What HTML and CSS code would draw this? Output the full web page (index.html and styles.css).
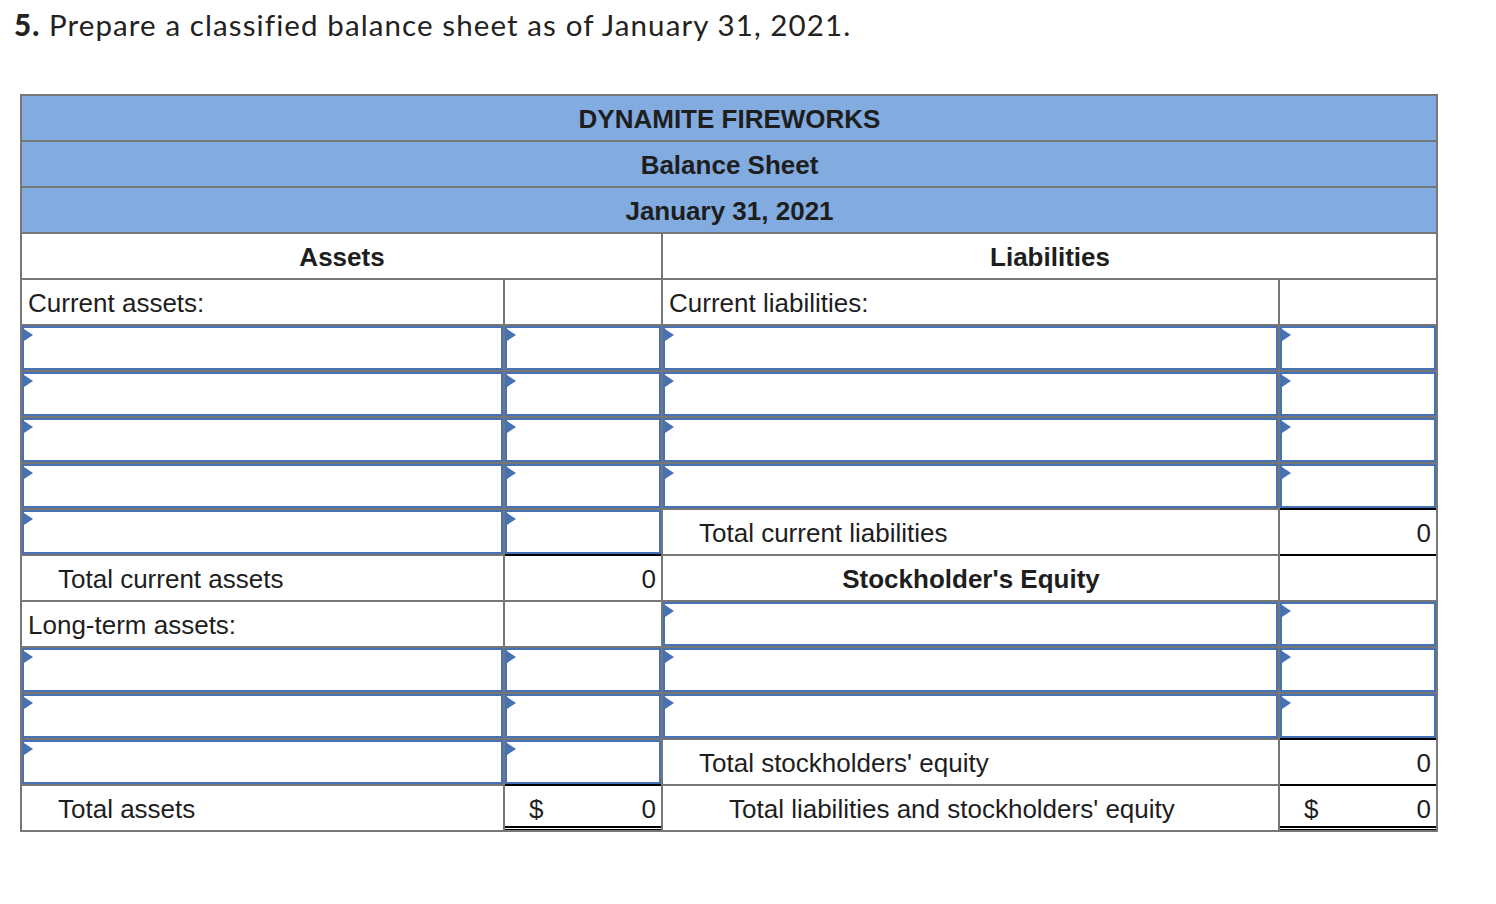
FILE: index.html
```html
<!DOCTYPE html>
<html>
<head>
<meta charset="utf-8">
<link rel="stylesheet" href="styles.css">
</head>
<body>
<div class="page">
  <div class="title"><b>5.</b> Prepare a classified balance sheet as of January 31, 2021.</div>
  <div class="sheet">
    <div class="c h">DYNAMITE FIREWORKS</div>
    <div class="c h">Balance Sheet</div>
    <div class="c h">January 31, 2021</div>

    <div class="c sec">Assets</div>
    <div class="c sec">Liabilities</div>

    <div class="c">Current assets:</div>
    <div class="c"></div>
    <div class="c">Current liabilities:</div>
    <div class="c"></div>

    <div class="c in"><div class="box"></div></div>
    <div class="c in"><div class="box"></div></div>
    <div class="c in"><div class="box"></div></div>
    <div class="c in"><div class="box"></div></div>

    <div class="c in"><div class="box"></div></div>
    <div class="c in"><div class="box"></div></div>
    <div class="c in"><div class="box"></div></div>
    <div class="c in"><div class="box"></div></div>

    <div class="c in"><div class="box"></div></div>
    <div class="c in"><div class="box"></div></div>
    <div class="c in"><div class="box"></div></div>
    <div class="c in"><div class="box"></div></div>

    <div class="c in"><div class="box"></div></div>
    <div class="c in"><div class="box"></div></div>
    <div class="c in"><div class="box"></div></div>
    <div class="c in"><div class="box"></div></div>

    <div class="c in"><div class="box"></div></div>
    <div class="c in"><div class="box"></div></div>
    <div class="c ind">Total current liabilities</div>
    <div class="c num line-tb">0</div>

    <div class="c ind">Total current assets</div>
    <div class="c num line-t">0</div>
    <div class="c center bold">Stockholder's Equity</div>
    <div class="c"></div>

    <div class="c">Long-term assets:</div>
    <div class="c"></div>
    <div class="c in"><div class="box"></div></div>
    <div class="c in"><div class="box"></div></div>

    <div class="c in"><div class="box"></div></div>
    <div class="c in"><div class="box"></div></div>
    <div class="c in"><div class="box"></div></div>
    <div class="c in"><div class="box"></div></div>

    <div class="c in"><div class="box"></div></div>
    <div class="c in"><div class="box"></div></div>
    <div class="c in"><div class="box"></div></div>
    <div class="c in"><div class="box"></div></div>

    <div class="c in"><div class="box"></div></div>
    <div class="c in"><div class="box"></div></div>
    <div class="c ind">Total stockholders' equity</div>
    <div class="c num line-tb">0</div>

    <div class="c ind">Total assets</div>
    <div class="c money dbl"><span>$</span><span>0</span></div>
    <div class="c ind2">Total liabilities and stockholders' equity</div>
    <div class="c money dbl"><span>$</span><span>0</span></div>
  </div>
</div>
</body>
</html>
```

FILE: styles.css
```css
html, body {
  margin: 0;
  padding: 0;
  background: #fff;
}

.page {
  padding-top: 7px;
}

.title {
  font-family: "Lato", "Open Sans", sans-serif;
  font-size: 29.5px;
  letter-spacing: 1.1px;
  line-height: 1.2;
  color: #222;
  padding-left: 14px;
  margin-bottom: 52px;
}

.title b {
  font-weight: 900;
}

.sheet {
  margin-left: 20px;
  display: grid;
  grid-template-columns: 481px 156px 615px 156px;
  grid-auto-rows: 44px;
  gap: 2px;
  padding: 2px;
  background: #777;
  width: max-content;
}

.c {
  background: #fff;
  display: flex;
  align-items: center;
  padding: 2px 5px 0 6px;
  font-family: "Liberation Sans", Arial, sans-serif;
  font-size: 26px;
  color: #1e1e1e;
  white-space: nowrap;
}

.h {
  grid-column: 1 / -1;
  background: #82abe0;
  justify-content: center;
  font-weight: bold;
}

.sec {
  grid-column: span 2;
  justify-content: center;
  font-weight: bold;
}

.center {
  justify-content: center;
}

.bold {
  font-weight: bold;
}

.in {
  padding: 0;
  align-items: stretch;
}

.box {
  flex: 1;
  border: 2px solid #4672b4;
  position: relative;
}

.box::before {
  content: "";
  position: absolute;
  left: 0;
  top: 1px;
  width: 0;
  height: 0;
  border-left: 9px solid #4672b4;
  border-top: 6px solid transparent;
  border-bottom: 6px solid transparent;
}

.ind {
  padding-left: 36px;
}

.ind2 {
  padding-left: 66px;
}

.num {
  justify-content: flex-end;
}

.money {
  justify-content: space-between;
  padding-left: 24px;
}

.line-t {
  box-shadow: 0 -2px 0 #000;
}

.line-tb {
  box-shadow: 0 -2px 0 #000, 0 2px 0 #000;
}

.dbl {
  box-shadow: inset 0 -1px 0 #000, inset 0 -2px 0 #fff, inset 0 -4px 0 #000, 0 -2px 0 #000;
}
```
